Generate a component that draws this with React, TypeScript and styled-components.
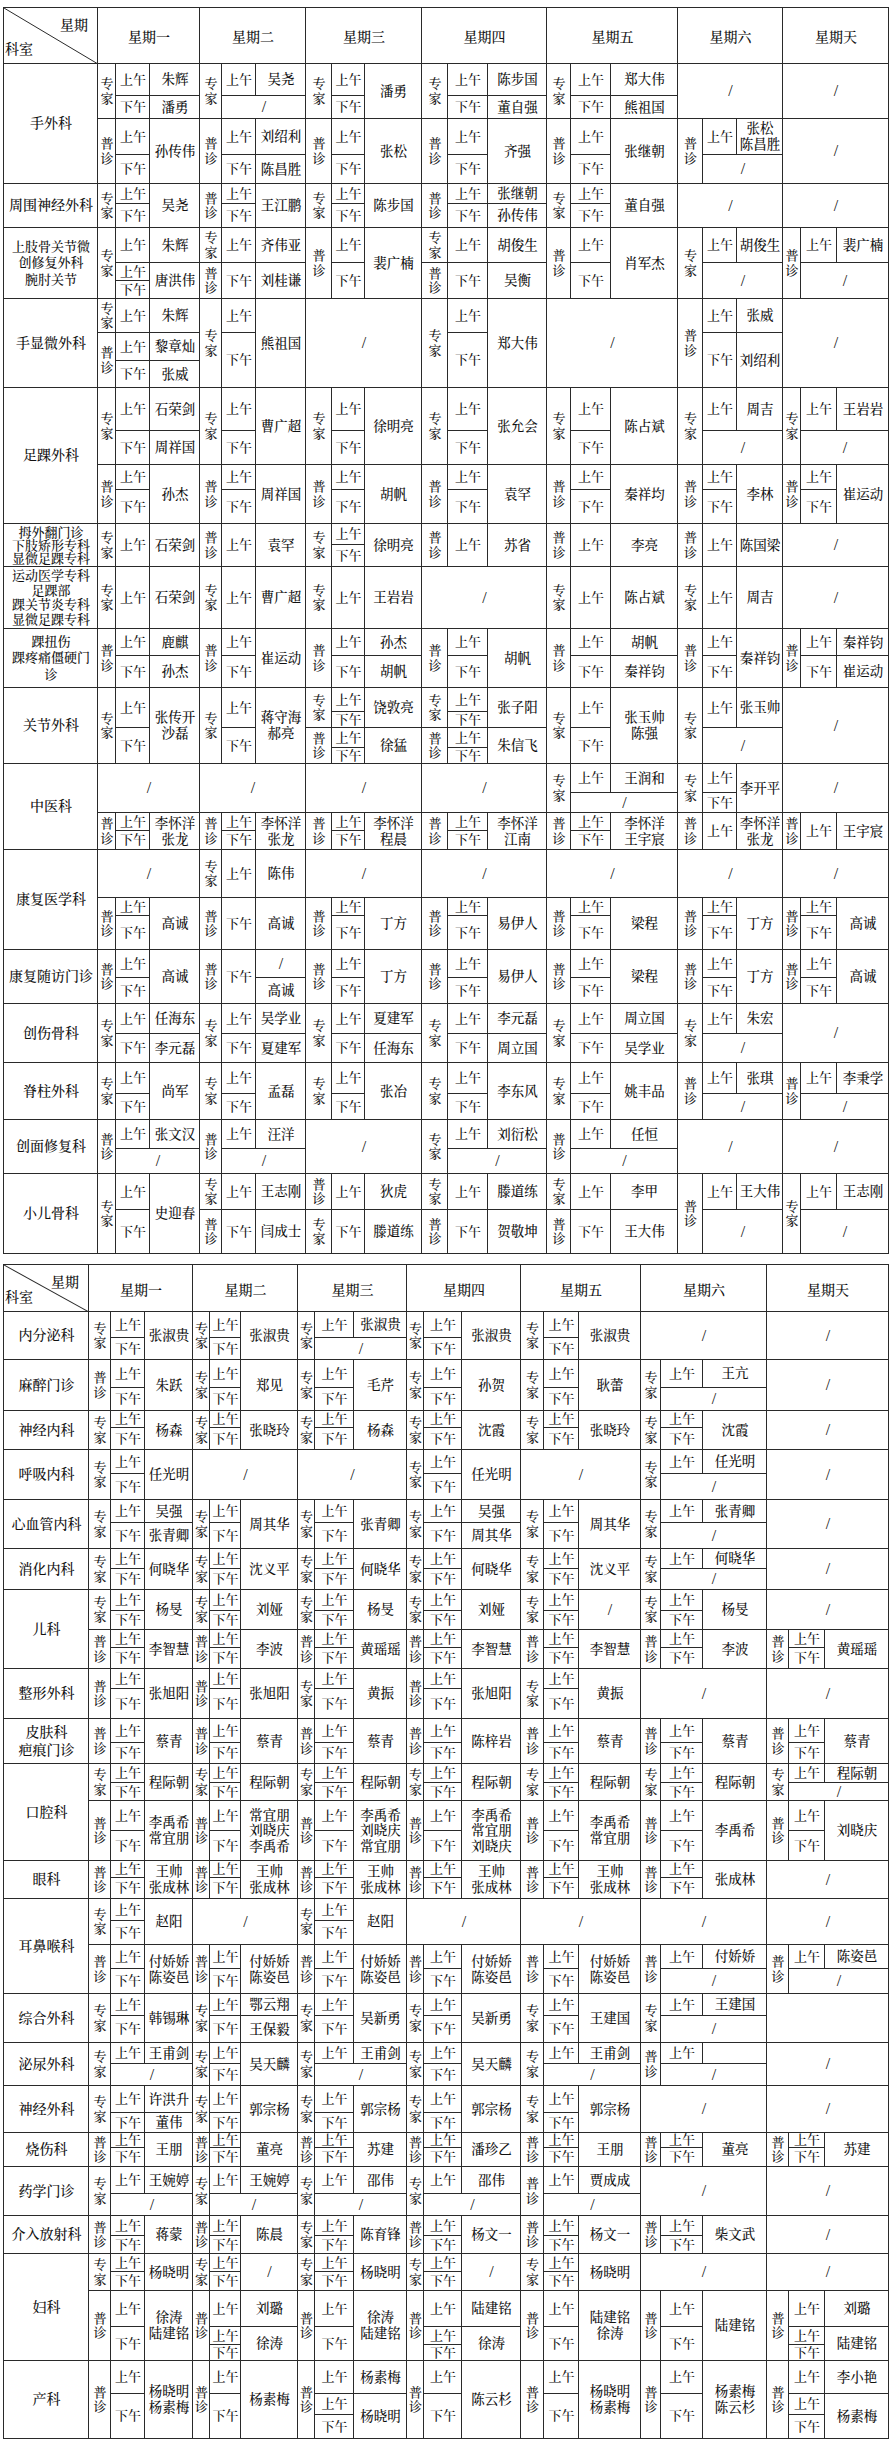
import React from "react";
import styled, { createGlobalStyle } from "styled-components";

type Item = [number, number, number, number, string];
type Block = { rows?: number[]; items: Item[] };
type Day = Block | Block[];
type Dept = { name: string; h: number; r?: number[]; b?: number[]; br?: number[][]; days: Day[] };
type Sheet = { dept: number; head: number; cols: number[][]; rows: Dept[] };

const LINE = "#2a2a2a";
const AM = "上午";
const PM = "下午";
const WEEK = ["星期一", "星期二", "星期三", "星期四", "星期五", "星期六", "星期天"];

// common cell layouts: type | time | name
const std = (t: string, n: string): Block => ({
  items: [[1, 2, 1, 1, t], [1, 1, 2, 1, AM], [2, 1, 2, 1, PM], [1, 2, 3, 1, n]],
});
const pr = (t: string, a: string, b: string): Block => ({
  items: [[1, 2, 1, 1, t], [1, 1, 2, 1, AM], [1, 1, 3, 1, a], [2, 1, 2, 1, PM], [2, 1, 3, 1, b]],
});
const am = (t: string, a: string): Block => ({
  items: [[1, 2, 1, 1, t], [1, 1, 2, 1, AM], [1, 1, 3, 1, a], [2, 1, 2, 2, "/"]],
});
const one = (t: string, m: string, n: string): Block => ({
  rows: [1],
  items: [[1, 1, 1, 1, t], [1, 1, 2, 1, m], [1, 1, 3, 1, n]],
});
const two = (t1: string, m1: string, n1: string, t2: string, m2: string, n2: string): Block => ({
  items: [[1, 1, 1, 1, t1], [1, 1, 2, 1, m1], [1, 1, 3, 1, n1], [2, 1, 1, 1, t2], [2, 1, 2, 1, m2], [2, 1, 3, 1, n2]],
});
const split = (t: string, a: string, b: string, rows: number[]): Block => ({
  rows,
  items: [[1, 3, 1, 1, t], [1, 1, 2, 1, AM], [1, 1, 3, 1, a], [2, 1, 2, 1, AM], [3, 1, 2, 1, PM], [2, 2, 3, 1, b]],
});
const X = (): Block => ({ rows: [1], items: [[1, 1, 1, 3, "/"]] });
const E = (): Block => ({ rows: [1], items: [[1, 1, 1, 3, ""]] });

const sheet1: Sheet = {
  dept: 94,
  head: 56,
  cols: [[18, 34, 50], [22, 34, 50], [26, 33, 57], [26, 40, 59], [24, 40, 67], [25, 34, 46], [18, 36, 52]],
  rows: [
    {
      name: "手外科", h: 120, b: [55, 65], br: [[32, 23], [36, 29]],
      days: [
        [pr("专家", "朱辉", "潘勇"), std("普诊", "孙传伟")],
        [am("专家", "吴尧"), pr("普诊", "刘绍利", "陈昌胜")],
        [std("专家", "潘勇"), std("普诊", "张松")],
        [pr("专家", "陈步国", "董自强"), std("普诊", "齐强")],
        [pr("专家", "郑大伟", "熊祖国"), std("普诊", "张继朝")],
        [X(), am("普诊", "张松\n陈昌胜")],
        [X(), X()],
      ],
    },
    {
      name: "周围神经外科", h: 44, r: [20, 24],
      days: [std("专家", "吴尧"), std("普诊", "王江鹏"), std("专家", "陈步国"), pr("普诊", "张继朝", "孙传伟"), std("专家", "董自强"), X(), X()],
    },
    {
      name: "上肢骨关节微\n创修复外科\n腕肘关节", h: 71, r: [35, 36],
      days: [
        split("专家", "朱辉", "唐洪伟", [35, 18, 18]),
        two("专家", AM, "齐伟亚", "普诊", PM, "刘桂谦"),
        std("普诊", "裴广楠"),
        two("专家", AM, "胡俊生", "普诊", PM, "吴衡"),
        std("普诊", "肖军杰"),
        am("专家", "胡俊生"),
        am("普诊", "裴广楠"),
      ],
    },
    {
      name: "手显微外科", h: 89, r: [34, 55],
      days: [
        {
          rows: [34, 28, 27],
          items: [[1, 1, 1, 1, "专家"], [1, 1, 2, 1, AM], [1, 1, 3, 1, "朱辉"], [2, 2, 1, 1, "普诊"], [2, 1, 2, 1, AM], [2, 1, 3, 1, "黎章灿"], [3, 1, 2, 1, PM], [3, 1, 3, 1, "张威"]],
        },
        std("专家", "熊祖国"),
        X(),
        std("专家", "郑大伟"),
        X(),
        pr("普诊", "张威", "刘绍利"),
        X(),
      ],
    },
    {
      name: "足踝外科", h: 136, b: [77, 59], br: [[43, 34], [25, 34]],
      days: [
        [pr("专家", "石荣剑", "周祥国"), std("普诊", "孙杰")],
        [std("专家", "曹广超"), std("普诊", "周祥国")],
        [std("专家", "徐明亮"), std("普诊", "胡帆")],
        [std("专家", "张允会"), std("普诊", "袁罕")],
        [std("专家", "陈占斌"), std("普诊", "秦祥均")],
        [am("专家", "周吉"), std("普诊", "李林")],
        [am("专家", "王岩岩"), std("普诊", "崔运动")],
      ],
    },
    {
      name: "拇外翻门诊\n下肢矫形专科\n显微足踝专科", h: 43, r: [21, 22],
      days: [one("专家", AM, "石荣剑"), one("普诊", AM, "袁罕"), std("专家", "徐明亮"), one("普诊", AM, "苏省"), one("普诊", AM, "李亮"), one("普诊", AM, "陈国梁"), X()],
    },
    {
      name: "运动医学专科\n足踝部\n踝关节炎专科\n显微足踝专科", h: 62,
      days: [one("专家", AM, "石荣剑"), one("专家", AM, "曹广超"), one("专家", AM, "王岩岩"), X(), one("专家", AM, "陈占斌"), one("专家", AM, "周吉"), X()],
    },
    {
      name: "踝扭伤\n踝疼痛僵硬门\n诊", h: 59, r: [27, 32],
      days: [
        pr("普诊", "鹿麒", "孙杰"), std("普诊", "崔运动"), pr("普诊", "孙杰", "胡帆"), std("普诊", "胡帆"),
        pr("普诊", "胡帆", "秦祥钧"), std("普诊", "秦祥钧"), pr("普诊", "秦祥钧", "崔运动"),
      ],
    },
    {
      name: "关节外科", h: 76, r: [40, 36], b: [40, 36], br: [[24, 16], [20, 16]],
      days: [
        std("专家", "张传开\n沙磊"),
        std("专家", "蒋守海\n郝亮"),
        [std("专家", "饶敦亮"), std("普诊", "徐猛")],
        [std("专家", "张子阳"), std("普诊", "朱信飞")],
        std("专家", "张玉帅\n陈强"),
        am("专家", "张玉帅"),
        X(),
      ],
    },
    {
      name: "中医科", h: 86, b: [49, 37], br: [[29, 20], [18, 19]],
      days: [
        [X(), std("普诊", "李怀洋\n张龙")],
        [X(), std("普诊", "李怀洋\n张龙")],
        [X(), std("普诊", "李怀洋\n程晨")],
        [X(), std("普诊", "李怀洋\n江南")],
        [am("专家", "王润和"), std("普诊", "李怀洋\n王宇宸")],
        [std("专家", "李开平"), one("普诊", AM, "李怀洋\n张龙")],
        [X(), one("普诊", AM, "王宇宸")],
      ],
    },
    {
      name: "康复医学科", h: 100, b: [48, 52], br: [[24, 24], [18, 34]],
      days: [
        [X(), std("普诊", "高诚")],
        [one("专家", AM, "陈伟"), one("普诊", PM, "高诚")],
        [X(), std("普诊", "丁方")],
        [X(), std("普诊", "易伊人")],
        [X(), std("普诊", "梁程")],
        [X(), std("普诊", "丁方")],
        [X(), std("普诊", "高诚")],
      ],
    },
    {
      name: "康复随访门诊", h: 54, r: [28, 26],
      days: [
        std("普诊", "高诚"),
        { items: [[1, 2, 1, 1, "普诊"], [1, 2, 2, 1, PM], [1, 1, 3, 1, "/"], [2, 1, 3, 1, "高诚"]] },
        std("普诊", "丁方"), std("普诊", "易伊人"), std("普诊", "梁程"), std("普诊", "丁方"), std("普诊", "高诚"),
      ],
    },
    {
      name: "创伤骨科", h: 59, r: [30, 29],
      days: [
        pr("专家", "任海东", "李元磊"), pr("专家", "吴学业", "夏建军"), pr("专家", "夏建军", "任海东"),
        pr("专家", "李元磊", "周立国"), pr("专家", "周立国", "吴学业"), am("专家", "朱宏"), X(),
      ],
    },
    {
      name: "脊柱外科", h: 57, r: [31, 26],
      days: [std("专家", "尚军"), std("专家", "孟磊"), std("专家", "张冶"), std("专家", "李东风"), std("专家", "姚丰品"), am("普诊", "张琪"), am("普诊", "李秉学")],
    },
    {
      name: "创面修复科", h: 54, r: [29, 25],
      days: [am("普诊", "张文汉"), am("普诊", "汪洋"), X(), am("专家", "刘衍松"), am("普诊", "任恒"), X(), X()],
    },
    {
      name: "小儿骨科", h: 80, r: [36, 44],
      days: [
        std("专家", "史迎春"),
        two("专家", AM, "王志刚", "普诊", PM, "闫成士"),
        two("普诊", AM, "狄虎", "专家", PM, "滕道练"),
        two("专家", AM, "滕道练", "普诊", PM, "贺敬坤"),
        two("专家", AM, "李甲", "普诊", PM, "王大伟"),
        am("普诊", "王大伟"),
        am("专家", "王志刚"),
      ],
    },
  ],
};

const sheet2: Sheet = {
  dept: 85,
  head: 47,
  cols: [[22, 34, 48], [17, 31, 57], [17, 39, 53], [17, 38, 59], [23, 35, 62], [20, 42, 64], [22, 36, 64]],
  rows: [
    {
      name: "内分泌科", h: 48, r: [26, 22],
      days: [std("专家", "张淑贵"), std("专家", "张淑贵"), am("专家", "张淑贵"), std("专家", "张淑贵"), std("专家", "张淑贵"), X(), X()],
    },
    {
      name: "麻醉门诊", h: 51, r: [28, 23],
      days: [std("普诊", "朱跃"), std("专家", "郑见"), std("专家", "毛芹"), std("专家", "孙贺"), std("专家", "耿蕾"), am("专家", "王亢"), X()],
    },
    {
      name: "神经内科", h: 39, r: [17, 22],
      days: [std("专家", "杨森"), std("专家", "张晓玲"), std("专家", "杨森"), std("专家", "沈霞"), std("专家", "张晓玲"), std("专家", "沈霞"), X()],
    },
    {
      name: "呼吸内科", h: 50, r: [24, 26],
      days: [std("专家", "任光明"), X(), X(), std("专家", "任光明"), X(), am("专家", "任光明"), X()],
    },
    {
      name: "心血管内科", h: 49, r: [23, 26],
      days: [pr("专家", "吴强", "张青卿"), std("专家", "周其华"), std("专家", "张青卿"), pr("专家", "吴强", "周其华"), std("专家", "周其华"), am("专家", "张青卿"), X()],
    },
    {
      name: "消化内科", h: 41, r: [20, 21],
      days: [std("专家", "何晓华"), std("专家", "沈义平"), std("专家", "何晓华"), std("专家", "何晓华"), std("专家", "沈义平"), am("专家", "何晓华"), X()],
    },
    {
      name: "儿科", h: 79, b: [40, 39], br: [[21, 19], [18, 21]],
      days: [
        [std("专家", "杨旻"), std("普诊", "李智慧")],
        [std("专家", "刘娅"), std("普诊", "李波")],
        [std("专家", "杨旻"), std("普诊", "黄瑶瑶")],
        [std("专家", "刘娅"), std("普诊", "李智慧")],
        [std("专家", "/"), std("普诊", "李智慧")],
        [std("专家", "杨旻"), std("普诊", "李波")],
        [X(), std("普诊", "黄瑶瑶")],
      ],
    },
    {
      name: "整形外科", h: 50, r: [20, 30],
      days: [std("普诊", "张旭阳"), std("普诊", "张旭阳"), std("专家", "黄振"), std("普诊", "张旭阳"), std("专家", "黄振"), X(), X()],
    },
    {
      name: "皮肤科\n疤痕门诊", h: 45, r: [24, 21],
      days: [std("普诊", "蔡青"), std("普诊", "蔡青"), std("普诊", "蔡青"), std("普诊", "陈梓岩"), std("普诊", "蔡青"), std("普诊", "蔡青"), std("普诊", "蔡青")],
    },
    {
      name: "口腔科", h: 97, b: [37, 60], br: [[19, 18], [30, 30]],
      days: [
        [std("专家", "程际朝"), std("普诊", "李禹希\n常宜朋")],
        [std("专家", "程际朝"), std("普诊", "常宜朋\n刘晓庆\n李禹希")],
        [std("专家", "程际朝"), std("普诊", "李禹希\n刘晓庆\n常宜朋")],
        [std("专家", "程际朝"), std("普诊", "李禹希\n常宜朋\n刘晓庆")],
        [std("专家", "程际朝"), std("普诊", "李禹希\n常宜朋")],
        [std("专家", "程际朝"), std("普诊", "李禹希")],
        [am("专家", "程际朝"), std("普诊", "刘晓庆")],
      ],
    },
    {
      name: "眼科", h: 38, r: [17, 21],
      days: [
        std("普诊", "王帅\n张成林"), std("普诊", "王帅\n张成林"), std("普诊", "王帅\n张成林"), std("普诊", "王帅\n张成林"),
        std("普诊", "王帅\n张成林"), std("普诊", "张成林"), X(),
      ],
    },
    {
      name: "耳鼻喉科", h: 95, b: [46, 49], br: [[22, 24], [24, 25]],
      days: [
        [std("专家", "赵阳"), std("普诊", "付娇娇\n陈姿邑")],
        [X(), std("普诊", "付娇娇\n陈姿邑")],
        [std("专家", "赵阳"), std("普诊", "付娇娇\n陈姿邑")],
        [X(), std("普诊", "付娇娇\n陈姿邑")],
        [X(), std("普诊", "付娇娇\n陈姿邑")],
        [X(), am("普诊", "付娇娇")],
        [X(), am("普诊", "陈姿邑")],
      ],
    },
    {
      name: "综合外科", h: 49, r: [22, 27],
      days: [std("专家", "韩锡琳"), pr("专家", "鄂云翔", "王保毅"), std("专家", "吴新勇"), std("专家", "吴新勇"), std("专家", "王建国"), am("专家", "王建国"), E()],
    },
    {
      name: "泌尿外科", h: 43, r: [21, 22],
      days: [am("专家", "王甫剑"), std("专家", "吴天麟"), am("专家", "王甫剑"), std("专家", "吴天麟"), am("专家", "王甫剑"), am("普诊", ""), X()],
    },
    {
      name: "神经外科", h: 47, r: [27, 20],
      days: [pr("专家", "许洪升", "董伟"), std("专家", "郭宗杨"), std("专家", "郭宗杨"), std("专家", "郭宗杨"), std("专家", "郭宗杨"), X(), X()],
    },
    {
      name: "烧伤科", h: 34, r: [15, 19],
      days: [std("普诊", "王朋"), std("普诊", "董亮"), std("普诊", "苏建"), std("普诊", "潘珍乙"), std("普诊", "王朋"), std("普诊", "董亮"), std("普诊", "苏建")],
    },
    {
      name: "药学门诊", h: 49, r: [27, 22],
      days: [am("专家", "王婉婷"), am("专家", "王婉婷"), am("专家", "邵伟"), am("专家", "邵伟"), am("普诊", "贾成成"), X(), X()],
    },
    {
      name: "介入放射科", h: 38, r: [20, 18],
      days: [std("普诊", "蒋蒙"), std("普诊", "陈晨"), std("专家", "陈育锋"), std("普诊", "杨文一"), std("普诊", "杨文一"), std("普诊", "柴文武"), X()],
    },
    {
      name: "妇科", h: 107, b: [37, 70], br: [[18, 19], [36, 34]],
      days: [
        [std("专家", "杨晓明"), std("普诊", "徐涛\n陆建铭")],
        [std("专家", "/"), split("普诊", "刘璐", "徐涛", [36, 18, 16])],
        [std("专家", "杨晓明"), std("普诊", "徐涛\n陆建铭")],
        [std("专家", "/"), split("普诊", "陆建铭", "徐涛", [36, 18, 16])],
        [std("专家", "杨晓明"), std("普诊", "陆建铭\n徐涛")],
        [X(), std("普诊", "陆建铭")],
        [X(), split("普诊", "刘璐", "陆建铭", [36, 18, 16])],
      ],
    },
    {
      name: "产科", h: 78, r: [33, 45],
      days: [
        std("普诊", "杨晓明\n杨素梅"),
        std("普诊", "杨素梅"),
        split("普诊", "杨素梅", "杨晓明", [33, 21, 24]),
        std("普诊", "陈云杉"),
        std("普诊", "杨晓明\n杨素梅"),
        std("普诊", "杨素梅\n陈云杉"),
        split("普诊", "李小艳", "杨素梅", [33, 21, 24]),
      ],
    },
  ],
};

const GlobalStyle = createGlobalStyle`
  html, body { margin: 0; padding: 0; background: #fff; }
  body {
    font-family: "Liberation Serif", "Noto Serif CJK SC", "Noto Sans CJK SC", serif;
    color: #111;
  }
`;

const Page = styled.div`
  width: 890px;
  box-sizing: border-box;
  padding: 7px 0 0 3px;
  display: flex;
  flex-direction: column;
  gap: 10px;
`;

const Table = styled.div<{ $cols: string }>`
  display: grid;
  grid-template-columns: ${(p) => p.$cols};
  width: max-content;
  border-top: 1px solid ${LINE};
  border-left: 1px solid ${LINE};
`;

const Cell = styled.div<{ $h: number }>`
  position: relative;
  box-sizing: border-box;
  height: ${(p) => p.$h}px;
  box-shadow: inset -1px -1px 0 ${LINE};
`;

const HeadCell = styled(Cell)`
  display: flex;
  align-items: center;
  justify-content: center;
  font-size: 14px;
  font-weight: 500;
`;

const CornerLine = styled.svg`
  position: absolute;
  inset: 0;
  width: 100%;
  height: 100%;
`;

const CornerText = styled.span<{ $top?: boolean }>`
  position: absolute;
  font-size: 14px;
  font-weight: 500;
  ${(p) => (p.$top ? "top: 6px; right: 10px;" : "bottom: 6px; left: 1px;")}
`;

const DeptCell = styled(Cell)<{ $size: number; $lh: number }>`
  display: flex;
  align-items: center;
  justify-content: center;
  text-align: center;
  white-space: pre-line;
  overflow: hidden;
  font-size: ${(p) => p.$size}px;
  font-weight: 500;
  line-height: ${(p) => p.$lh};
`;

const DayCell = styled(Cell)`
  display: flex;
  flex-direction: column;
`;

const BlockGrid = styled.div<{ $cols: string; $rows: string; $grow: number }>`
  display: grid;
  grid-template-columns: ${(p) => p.$cols};
  grid-template-rows: ${(p) => p.$rows};
  flex: ${(p) => p.$grow} 1 0px;
  min-height: 0;
`;

type Kind = "type" | "time" | "name" | "slash";

const Slot = styled.div<{ $kind: Kind }>`
  box-shadow: inset -1px -1px 0 ${LINE};
  display: flex;
  flex-direction: ${(p) => (p.$kind === "type" ? "column" : "row")};
  align-items: center;
  justify-content: center;
  text-align: center;
  white-space: pre-line;
  overflow: hidden;
  min-height: 0;
  font-weight: 500;
  line-height: ${(p) => (p.$kind === "type" ? 1.08 : 1.15)};
  font-size: ${(p) => (p.$kind === "slash" ? "16px" : p.$kind === "name" ? "13.5px" : "13px")};
  font-family: ${(p) => (p.$kind === "slash" ? '"Liberation Serif", serif' : "inherit")};
`;

const kindOf = ([, , c, cs, text]: Item): Kind => {
  if (text === "/") return "slash";
  if (c === 1 && cs === 1) return "type";
  if (c === 2 && cs === 1) return "time";
  return "name";
};

const toRows = (rows: number[]) => rows.map((r) => `minmax(0, ${r}fr)`).join(" ");

const BlockView: React.FC<{ block: Block; rows: number[]; cols: string; grow: number }> = ({ block, rows, cols, grow }) => (
  <BlockGrid $cols={cols} $rows={toRows(block.rows ?? rows)} $grow={grow}>
    {block.items.map((it, i) => {
      const [r, rs, c, cs, text] = it;
      const kind = kindOf(it);
      return (
        <Slot key={i} $kind={kind} style={{ gridRow: `${r} / span ${rs}`, gridColumn: `${c} / span ${cs}` }}>
          {kind === "type" ? text.split("").map((ch, j) => <span key={j}>{ch}</span>) : text}
        </Slot>
      );
    })}
  </BlockGrid>
);

const DayView: React.FC<{ day: Day; dept: Dept; cols: number[] }> = ({ day, dept, cols }) => {
  const tpl = cols.map((c) => `${c}px`).join(" ");
  return (
    <DayCell $h={dept.h}>
      {Array.isArray(day) ? (
        day.map((blk, i) => <BlockView key={i} block={blk} rows={dept.br![i]} cols={tpl} grow={dept.b![i]} />)
      ) : (
        <BlockView block={day} rows={dept.r ?? [1, 1]} cols={tpl} grow={1} />
      )}
    </DayCell>
  );
};

const DeptName: React.FC<{ dept: Dept }> = ({ dept }) => {
  const lines = dept.name.split("\n").length;
  const size = lines > 2 ? 13 : 14;
  const lh = Math.min(1.25, (dept.h - 4) / (lines * size));
  return (
    <DeptCell $h={dept.h} $size={size} $lh={lh}>
      {dept.name}
    </DeptCell>
  );
};

const Schedule: React.FC<{ sheet: Sheet }> = ({ sheet }) => {
  const widths = sheet.cols.map((c) => c.reduce((a, b) => a + b, 0));
  const tpl = [sheet.dept, ...widths].map((w) => `${w}px`).join(" ");
  return (
    <Table $cols={tpl}>
      <HeadCell $h={sheet.head}>
        <CornerLine viewBox="0 0 100 100" preserveAspectRatio="none">
          <line x1="0" y1="0" x2="100" y2="100" stroke={LINE} strokeWidth="1" vectorEffect="non-scaling-stroke" />
        </CornerLine>
        <CornerText $top>星期</CornerText>
        <CornerText>科室</CornerText>
      </HeadCell>
      {WEEK.map((w) => (
        <HeadCell key={w} $h={sheet.head}>
          {w}
        </HeadCell>
      ))}
      {sheet.rows.map((dept) => (
        <React.Fragment key={dept.name}>
          <DeptName dept={dept} />
          {dept.days.map((day, i) => (
            <DayView key={i} day={day} dept={dept} cols={sheet.cols[i]} />
          ))}
        </React.Fragment>
      ))}
    </Table>
  );
};

export default function App() {
  return (
    <>
      <GlobalStyle />
      <Page>
        <Schedule sheet={sheet1} />
        <Schedule sheet={sheet2} />
      </Page>
    </>
  );
}
